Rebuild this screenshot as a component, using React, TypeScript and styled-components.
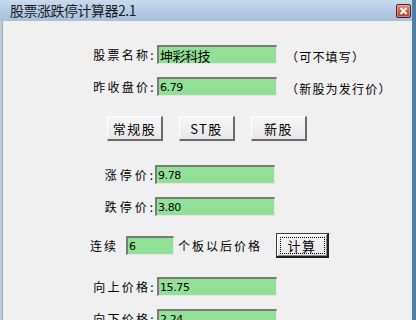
import styled, { createGlobalStyle } from "styled-components";

const Global = createGlobalStyle`
  html, body {
    margin: 0;
    padding: 0;
    overflow: hidden;
    background: #6f8fb0;
  }
  * {
    box-sizing: border-box;
  }
`;

const CJK = `"Noto Sans CJK SC", "Noto Sans", sans-serif`;

const App = () => (
  <>
    <Global />
    <Window>
      <TitleBar>
        <Title>股票涨跌停计算器2.1</Title>
        <CloseButton>
          <svg width="9" height="8" viewBox="0 0 9 8">
            <path d="M1.5 1 L7.5 7 M7.5 1 L1.5 7" stroke="#ffffff" strokeWidth="2" />
          </svg>
        </CloseButton>
      </TitleBar>
      <Client>
        <FieldRow $top={24}>
          <Label>股票名称:</Label>
          <Input value="坤彩科技" $cjk />
          <Hint>（可不填写）</Hint>
        </FieldRow>
        <FieldRow $top={13}>
          <Label>昨收盘价:</Label>
          <Input value="6.79" />
          <Hint>（新股为发行价）</Hint>
        </FieldRow>
        <ButtonRow>
          <Button>常规股</Button>
          <Button>ST股</Button>
          <Button>新股</Button>
        </ButtonRow>
        <FieldRow $top={24}>
          <Label $wide>涨停价:</Label>
          <Input value="9.78" />
        </FieldRow>
        <FieldRow $top={13}>
          <Label $wide>跌停价:</Label>
          <Input value="3.80" />
        </FieldRow>
        <BoardRow>
          <Text>连续</Text>
          <Input value="6" $width={48} />
          <Text>个板以后价格</Text>
          <Button $default $width={53}>
            <FocusRing>计算</FocusRing>
          </Button>
        </BoardRow>
        <FieldRow $top={19}>
          <Label>向上价格:</Label>
          <Input value="15.75" />
        </FieldRow>
        <FieldRow $top={13}>
          <Label>向下价格:</Label>
          <Input value="2.24" />
        </FieldRow>
      </Client>
    </Window>
  </>
);

export default App;

const Window = styled.div`
  width: 416px;
  height: 320px;
  overflow: hidden;
  display: flex;
  flex-direction: column;
  background: #b8cce4;
  border-right: 4px solid #4f7fa6;
`;

const TitleBar = styled.div`
  height: 21px;
  flex: none;
  display: flex;
  align-items: center;
  padding: 0 1px 0 10px;
  background: linear-gradient(180deg, #c8daed 0%, #b4cae3 55%, #a8c0dc 100%);
`;

const Title = styled.div`
  flex: 1;
  font-family: ${CJK};
  font-size: 14px;
  color: #1c1c1c;
  letter-spacing: -0.5px;
  line-height: 21px;
`;

const CloseButton = styled.div`
  flex: none;
  display: flex;
  align-items: center;
  justify-content: center;
  width: 15px;
  height: 14px;
  margin-top: 1px;
  border: 1px solid #4a2020;
  border-radius: 2px;
  background: linear-gradient(180deg, #e09080 0%, #c85a44 55%, #b04430 100%);
  box-shadow: inset 0 0 0 1px rgba(255, 220, 210, 0.4);
`;

const Client = styled.div`
  flex: 1;
  background: #f0f0f0;
  margin-left: 2px;
  border-left: 1px solid #a9a9a9;
  display: flex;
  flex-direction: column;
`;

const FieldRow = styled.div<{ $top: number }>`
  display: flex;
  align-items: center;
  height: 19px;
  margin-top: ${(p) => p.$top}px;
  flex: none;
`;

const Label = styled.div<{ $wide?: boolean }>`
  width: 154px;
  text-align: right;
  padding-right: 1px;
  font-family: ${CJK};
  font-size: 12px;
  color: #000;
  letter-spacing: ${(p) => (p.$wide ? "3px" : "2.3px")};
  margin-right: ${(p) => (p.$wide ? "-2px" : "0")};
  white-space: nowrap;
`;

const Input = styled.input.attrs({ readOnly: true })<{ $width?: number; $cjk?: boolean }>`
  width: ${(p) => p.$width ?? 120}px;
  height: 19px;
  padding: 0 0 0 1px;
  margin: 0;
  background: #90e096;
  border-style: solid;
  border-width: 2px 1px 1px 2px;
  border-color: #7a7a7a #e6e6e6 #e6e6e6 #7a7a7a;
  font-family: ${(p) => (p.$cjk ? CJK : `"DejaVu Sans", sans-serif`)};
  font-size: ${(p) => (p.$cjk ? "13px" : "11px")};
  letter-spacing: ${(p) => (p.$cjk ? "-0.5px" : "-0.4px")};
  color: #000;
  outline: none;
`;

const Hint = styled.div`
  margin-left: 9px;
  margin-top: 3px;
  font-family: ${CJK};
  font-size: 12px;
  letter-spacing: 1.2px;
  color: #000;
  white-space: nowrap;
`;

const ButtonRow = styled.div`
  display: flex;
  gap: 16px;
  padding-left: 104px;
  margin-top: 20px;
  flex: none;
`;

const Button = styled.div<{ $default?: boolean; $width?: number }>`
  width: ${(p) => p.$width ?? 56}px;
  height: 25px;
  display: flex;
  align-items: center;
  justify-content: center;
  background: linear-gradient(180deg, #f6f6f6 0%, #e8e8e8 100%);
  border-style: solid;
  border-width: 1px 2px 2px 1px;
  border-color: ${(p) =>
    p.$default ? "#404040 #202020 #202020 #404040" : "#ffffff #6a6a6a #6a6a6a #ffffff"};
  box-shadow: ${(p) => (p.$default ? "inset 1px 1px 0 #fff, inset -1px -1px 0 #8a8a8a" : "none")};
  font-family: ${CJK};
  font-size: 13px;
  letter-spacing: 1.5px;
  color: #000;
  white-space: nowrap;
`;

const FocusRing = styled.span`
  width: 45px;
  height: 17px;
  border: 1px dotted #000;
  display: flex;
  align-items: center;
  justify-content: center;
`;

const BoardRow = styled.div`
  display: flex;
  align-items: center;
  height: 25px;
  margin-top: 17px;
  padding-left: 87px;
  flex: none;
`;

const Text = styled.div`
  font-family: ${CJK};
  font-size: 12px;
  letter-spacing: 2px;
  color: #000;
  margin: 0 4px 0 0;
  white-space: nowrap;

  & + input {
    margin-left: 4px;
  }

  input + & {
    margin-left: 4px;
    margin-right: 14px;
  }
`;
